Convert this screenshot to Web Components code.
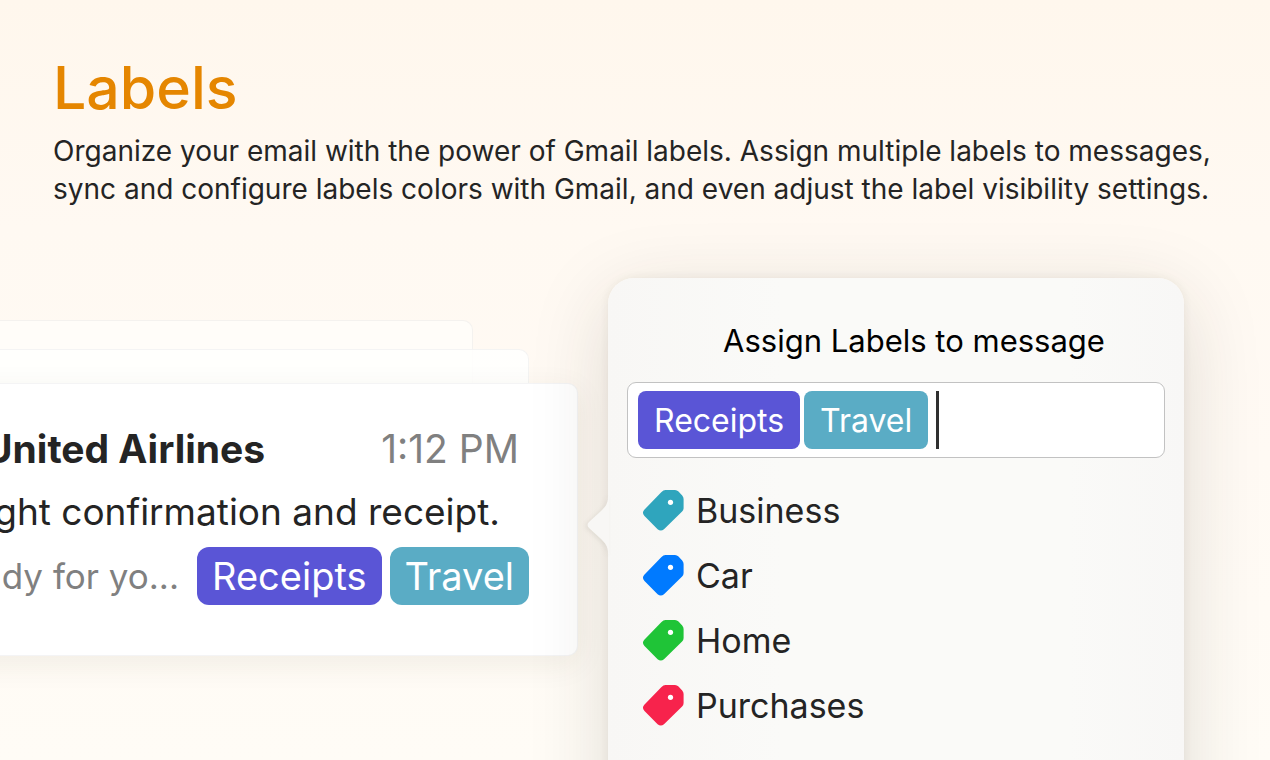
<!DOCTYPE html>
<html lang="en">
<head>
<meta charset="utf-8">
<meta name="viewport" content="width=device-width, initial-scale=1">
<title>Labels</title>
<style>
  html, body { height: 100%; margin: 0; }
  body { overflow: hidden; font-family: Inter, "Liberation Sans", sans-serif; color: #242424; }
</style>
</head>
<body>
<labels-feature></labels-feature>

<template id="feature">
  <style>
    :host { display: flex; flex-direction: column; gap: 70px; height: 100vh; overflow: hidden;
      background: linear-gradient(#fff7ed, #fff9f2 30%, #fffaf4 60%, #fffcf6); }
    .scene { flex: 1; display: grid; grid-template-columns: minmax(0, 1fr) 576px; gap: 30px; padding-right: 86px; min-height: 0; }
    message-stack { margin-top: 42px; }
    label-popover { margin-bottom: -100px; }
  </style>
  <feature-intro>
    <span slot="title">Labels</span>
    Organize your email with the power of Gmail labels. Assign multiple labels to messages, sync and configure labels colors with Gmail, and even adjust the label visibility settings.
  </feature-intro>
  <div class="scene">
    <message-stack></message-stack>
    <label-popover></label-popover>
  </div>
</template>

<template id="intro">
  <style>
    :host { display: block; padding: 50px 53px 0; }
    h1 { margin: 0; font-size: 59px; line-height: 76px; font-weight: 500; color: #e58600; }
    p { margin: 6px 0 0; font-size: 28px; line-height: 38px; }
  </style>
  <h1><slot name="title"></slot></h1>
  <p><slot></slot></p>
</template>

<template id="chip">
  <style>
    :host { display: flex; align-items: center; justify-content: center; box-sizing: border-box; color: #fff; white-space: nowrap;
      height: 58px; padding: 0 15px; border-radius: 12px; font-size: 38px; background: #5a55d6; }
    :host([tone="teal"]) { background: #5aacc5; }
    :host([compact]) { padding: 0 16px; font-size: 32px; border-radius: 8px; }
  </style>
  <slot></slot>
</template>

<template id="stack">
  <style>
    :host { display: grid; align-self: start; margin-left: -160px; }
    .sheet { grid-area: 1 / 1; border: 1px solid rgba(60, 60, 90, .06); border-radius: 10px; box-shadow: 0 8px 30px rgba(80, 60, 30, .08); }
    .far { height: 200px; margin-right: 105px; background: #fffdf9; box-shadow: none; }
    .near { height: 200px; margin: 29px 49px 0 0; background: rgba(255, 255, 254, .86); box-shadow: none; }
    article { margin-top: 63px; padding: 37px 48px 50px 0; background: #fff; }
    .row { display: flex; justify-content: flex-end; align-items: center; white-space: nowrap; font-size: 37px; line-height: 58px; }
    .from { gap: 116px; margin-right: 10px; font-size: 39px; line-height: 56px; }
    h3 { margin: 0; font: inherit; font-weight: 700; }
    .subject { margin: 0 29px 0 0; line-height: 70px; }
    .preview { gap: 8px; }
    .muted { color: #808080; }
    .preview .muted { margin-right: 10px; font-size: 35px; }
  </style>
  <div class="sheet far"></div>
  <div class="sheet near"></div>
  <article class="sheet">
    <div class="row from"><h3>United Airlines</h3><time class="muted" datetime="13:12">1:12 PM</time></div>
    <p class="row subject">Flight confirmation and receipt.</p>
    <div class="row preview">
      <span class="muted">ready for yo...</span>
      <label-chip>Receipts</label-chip>
      <label-chip tone="teal">Travel</label-chip>
    </div>
  </article>
</template>

<template id="popover">
  <style>
    :host { display: block; position: relative; box-sizing: border-box; padding: 42px 19px; border-radius: 26px; background: linear-gradient(90deg, #f8f7f5, #fafaf8 30%, #fafaf8 80%, #f8f7f6);
      box-shadow: 0 20px 80px rgba(45, 40, 25, .15), 0 0 10px rgba(60, 50, 30, .07); }
    .arrow { position: absolute; right: 100%; top: 218px; width: 21px; height: 58px; overflow: visible; filter: drop-shadow(-2px 1px 2px rgba(60, 50, 30, .09)); }
    label.title { display: block; margin: 0; padding-left: 36px; text-align: center; font-size: 31px; line-height: 42px; color: #000; }
    .field { display: flex; align-items: center; gap: 4px; box-sizing: border-box; height: 76px; margin-top: 20px; padding: 0 10px; background: #fff; border: 1px solid #c2c2c2; border-radius: 9px; }
    .caret { flex: none; width: 3px; height: 58px; margin-left: 4px; background: #303030; }
    input { flex: 1; min-width: 0; border: 0; padding: 0; outline: 0; background: none; font: inherit; font-size: 32px; caret-color: transparent; }
    ul { list-style: none; margin: 20px 0 0; padding: 0 15px; }
  </style>
  <svg class="arrow" viewBox="0 0 21 58" aria-hidden="true"><path d="M22 0H21V1C21 8 18 11 14 15L2 26Q-1 29 2 32L14 43C18 47 21 50 21 57V58H22Z" fill="#f8f7f5"/></svg>
  <label class="title" for="labels">Assign Labels to message</label>
  <div class="field">
    <label-chip compact>Receipts</label-chip>
    <label-chip compact tone="teal">Travel</label-chip>
    <span class="caret"></span>
    <input id="labels" type="text" autocomplete="off">
  </div>
  <ul>
    <li><label-option style="--tag:#2fa5bd">Business</label-option></li>
    <li><label-option style="--tag:#007aff">Car</label-option></li>
    <li><label-option style="--tag:#1fc437">Home</label-option></li>
    <li><label-option style="--tag:#f7234c">Purchases</label-option></li>
  </ul>
</template>

<template id="option">
  <style>
    :host { display: block; }
    button { display: flex; align-items: center; gap: 12px; width: 100%; height: 65px; padding: 0; border: 0; background: none; font: inherit; font-size: 34px; color: inherit; text-align: left; cursor: pointer; }
    svg { flex: none; width: 42px; height: 42px; }
  </style>
  <button type="button">
    <svg viewBox="-1 0 42 42" aria-hidden="true">
      <path d="M22.500 0H32Q34 0 35.500 1.500L39.200 5.500Q40.600 7 40.600 9V18Q40.600 20 39.100 21.500L21 39.200Q17.800 42 14.600 39.200L1.500 26Q-1.500 23 1.300 19.800L18.500 2Q20.300 0 22.500 0Z" fill="var(--tag)"/>
      <circle cx="27.500" cy="12.300" r="2.600" fill="#fff"/>
    </svg>
    <slot></slot>
  </button>
</template>

<script>
  const define = (name, templateId) => customElements.define(name, class extends HTMLElement {
    constructor() {
      super();
      this.attachShadow({ mode: "open" })
        .append(document.getElementById(templateId).content.cloneNode(true));
    }
  });
  define("label-chip", "chip");
  define("label-option", "option");
  define("feature-intro", "intro");
  define("message-stack", "stack");
  define("label-popover", "popover");
  define("labels-feature", "feature");
</script>
</body>
</html>
